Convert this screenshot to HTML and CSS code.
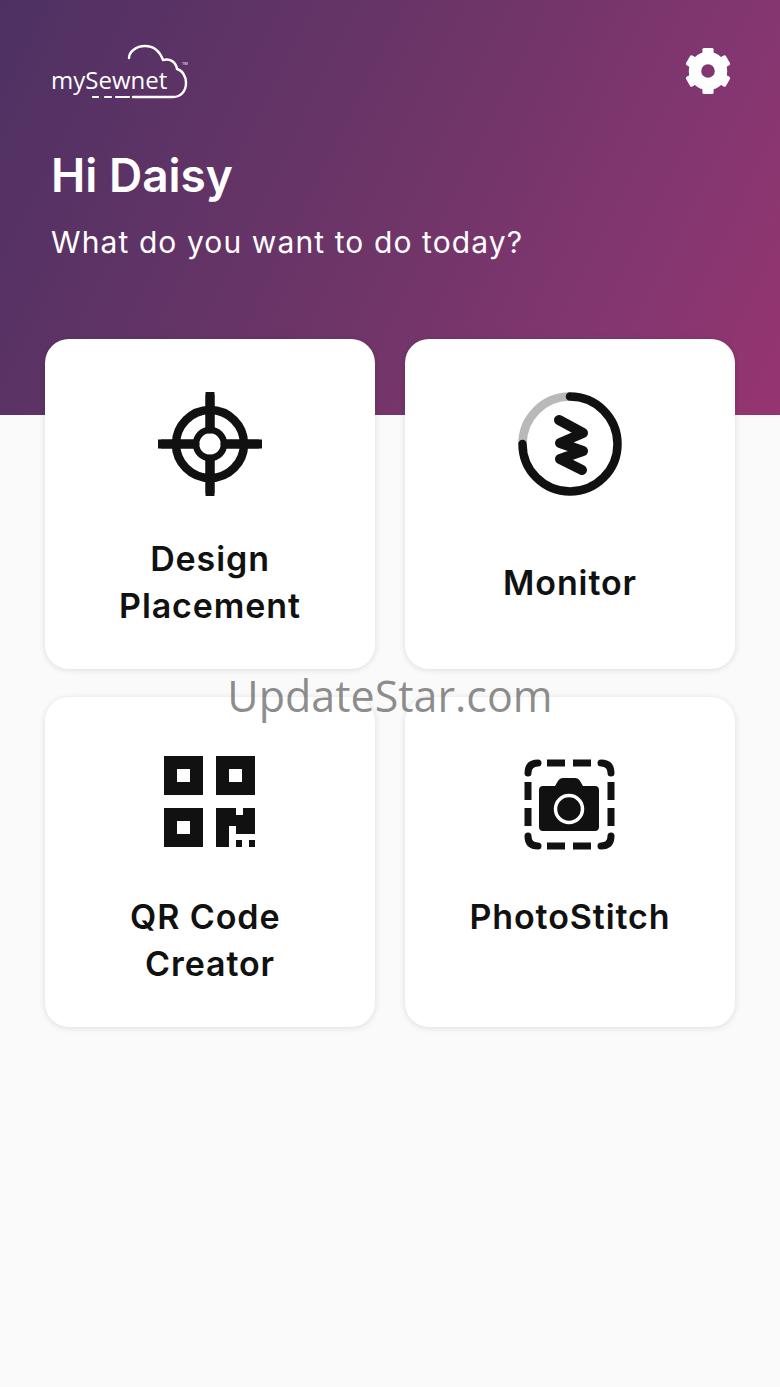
FILE: index.html
```html
<!DOCTYPE html>
<html lang="en">
<head>
<meta charset="utf-8">
<title>mySewnet</title>
<link rel="stylesheet" href="styles.css">
</head>
<body>
<div class="app">
  <header class="hero">
    <div class="topbar">
      <div class="logo">
        <svg class="logo-cloud" width="140" height="56" viewBox="0 0 140 56" fill="none" stroke="#fff" stroke-linecap="round" stroke-linejoin="round">
          <path d="M82 53 H122 C130 53 135 47 135 39 C135 32 131 26 126 25 C125 18 119 14 112 16 C109 8 103 2 94 2 C85 2 78 8 78 14" stroke-width="2.4"/>
          <path d="M42 53 H47 M54 53 H60 M65 53 H78" stroke-width="2.2"/>
        </svg>
        <span class="logo-text">mySewnet</span>
        <span class="logo-tm">TM</span>
      </div>
      <svg class="gear" width="50" height="50" viewBox="0 0 25 25">
        <g fill="#fff">
          <rect x="9.700" y="1" width="5.600" height="6" rx="0.800"/>
          <rect x="9.700" y="1" width="5.600" height="6" rx="0.800" transform="rotate(60 12.500 12.500)"/>
          <rect x="9.700" y="1" width="5.600" height="6" rx="0.800" transform="rotate(120 12.500 12.500)"/>
          <rect x="9.700" y="1" width="5.600" height="6" rx="0.800" transform="rotate(180 12.500 12.500)"/>
          <rect x="9.700" y="1" width="5.600" height="6" rx="0.800" transform="rotate(240 12.500 12.500)"/>
          <rect x="9.700" y="1" width="5.600" height="6" rx="0.800" transform="rotate(300 12.500 12.500)"/>
        </g>
        <circle cx="12.500" cy="12.500" r="6.500" fill="none" stroke="#fff" stroke-width="6.200"/>
      </svg>
    </div>
    <h1 class="greeting">Hi Daisy</h1>
    <p class="question">What do you want to do today?</p>
  </header>

  <main class="cards">
    <a class="card">
      <svg class="icon" width="104" height="104" viewBox="0 0 104 104" fill="none" stroke="#111">
        <circle cx="52" cy="52" r="34" stroke-width="8.500"/>
        <circle cx="52" cy="52" r="14" stroke-width="6.500"/>
        <path d="M52 1V37M52 67V103M1 52H37M67 52H103" stroke-width="9" stroke-linecap="round"/>
        <path d="M52 3V37M52 67V101M3 52H37M67 52H101" stroke-width="9"/>
      </svg>
      <span class="label">Design<br>Placement</span>
    </a>
    <a class="card">
      <svg class="icon" width="104" height="104" viewBox="0 0 104 104" fill="none" stroke-width="8.500">
        <path d="M4.500 52 A47.500 47.500 0 0 1 52 4.500" stroke="#b9b9b9"/>
        <path d="M52 4.500 A47.500 47.500 0 1 1 4.500 52" stroke="#111" stroke-linecap="round"/>
        <path d="M41 28 L65 41 L42 51 L65 59 L42 67 L64 78" stroke="#111" stroke-width="10" stroke-linecap="round" stroke-linejoin="round"/>
      </svg>
      <span class="label">Monitor</span>
    </a>
    <a class="card card-low">
      <svg class="icon" width="92" height="92" viewBox="0 0 92 92">
        <path fill="#111" fill-rule="evenodd" d="M0 0H39V39H0ZM13 13V26H26V13ZM52 0H91V39H52ZM65 13V26H78V13ZM0 52H39V91H0ZM13 65V78H26V65ZM52 52H72V59H79V52H91V78H72V70H65V91H52Z"/>
        <path fill="#111" d="M72 84H78V91H72ZM85 84H91V91H85Z"/>
      </svg>
      <span class="label">QR Code&nbsp;<br>Creator</span>
    </a>
    <a class="card card-low">
      <svg class="icon icon-photo" width="92" height="92" viewBox="0 0 92 92" fill="none">
        <g transform="translate(0 3)">
          <path d="M4 14 Q4 4 14 4 M77 4 Q87 4 87 14 M87 77 Q87 87 77 87 M14 87 Q4 87 4 77" stroke="#111" stroke-width="7" stroke-linecap="round"/>
          <path d="M23 4H41M49 4H67M23 87H41M49 87H67M4 23V41M4 49V67M87 23V41M87 49V67" stroke="#111" stroke-width="7"/>
          <path fill="#111" d="M19 27H31L34 22C35 20 37 19 39 19H51C53 19 55 20 56 22L59 27H71C73.500 27 75 28.500 75 31V68C75 70.500 73.500 72 71 72H19C16.500 72 15 70.500 15 68V31C15 28.500 16.500 27 19 27Z"/>
          <circle cx="45" cy="50" r="13.500" stroke="#fff" stroke-width="3.500"/>
        </g>
      </svg>
      <span class="label">PhotoStitch</span>
    </a>
  </main>
  <div class="watermark">UpdateStar.com</div>
</div>
</body>
</html>
```
FILE: styles.css
```css
* { box-sizing: border-box; }
html, body { margin: 0; padding: 0; }
body { font-family: "Inter", "Open Sans", sans-serif; background: #fafafa; color: #111; }
.app { position: relative; width: 780px; height: 1387px; overflow: hidden; background: #fafafa; }

.hero {
  height: 415px;
  padding: 44px 50px 0 51px;
  background: linear-gradient(116deg, #4e3163 0%, #6e3568 50%, #843670 79%, #96356f 100%);
  color: #fff;
}
.topbar { display: flex; justify-content: space-between; align-items: flex-start; }
.logo { position: relative; width: 140px; height: 56px; }
.logo-cloud { display: block; }
.logo-text { position: absolute; left: 0; top: 21px; font: 500 24px/30px "Open Sans", sans-serif; letter-spacing: 0; color: #fff; }
.logo-tm { position: absolute; left: 131px; top: 17px; font: 400 4px/5px "Open Sans", sans-serif; color: #fff; }
.gear { display: block; margin-top: 2px; margin-right: -3px; }
.greeting { margin: 0; padding-top: 48px; font-size: 46px; line-height: 54px; font-weight: 600; letter-spacing: 0; }
.question { margin: 21px 0 0; font-size: 30px; line-height: 38px; font-weight: 400; letter-spacing: 1.1px; }

.cards {
  display: grid;
  grid-template-columns: 330px 330px;
  grid-auto-rows: 330px;
  column-gap: 30px;
  row-gap: 28px;
  margin: -76px 0 0 45px;
}
.card {
  display: flex;
  flex-direction: column;
  align-items: center;
  background: #fff;
  border-radius: 24px;
  box-shadow: 0 1px 6px rgba(0, 0, 0, 0.12);
  padding-top: 53px;
}
.card-low { padding-top: 59px; }
.icon { display: block; flex: none; }
.icon-photo { overflow: visible; }
.label {
  display: flex;
  align-items: center;
  justify-content: center;
  text-align: center;
  height: 94px;
  margin-top: 39px;
  font-size: 34px;
  line-height: 47px;
  font-weight: 600;
  letter-spacing: 0.9px;
  color: #111;
}
.card-low .label { display: block; margin-top: 45px; }

.watermark {
  position: absolute;
  left: 0;
  right: 0;
  top: 667px;
  text-align: center;
  font: 400 43px/58px "Open Sans", sans-serif;
  color: rgba(90, 90, 90, 0.7);
}
```
